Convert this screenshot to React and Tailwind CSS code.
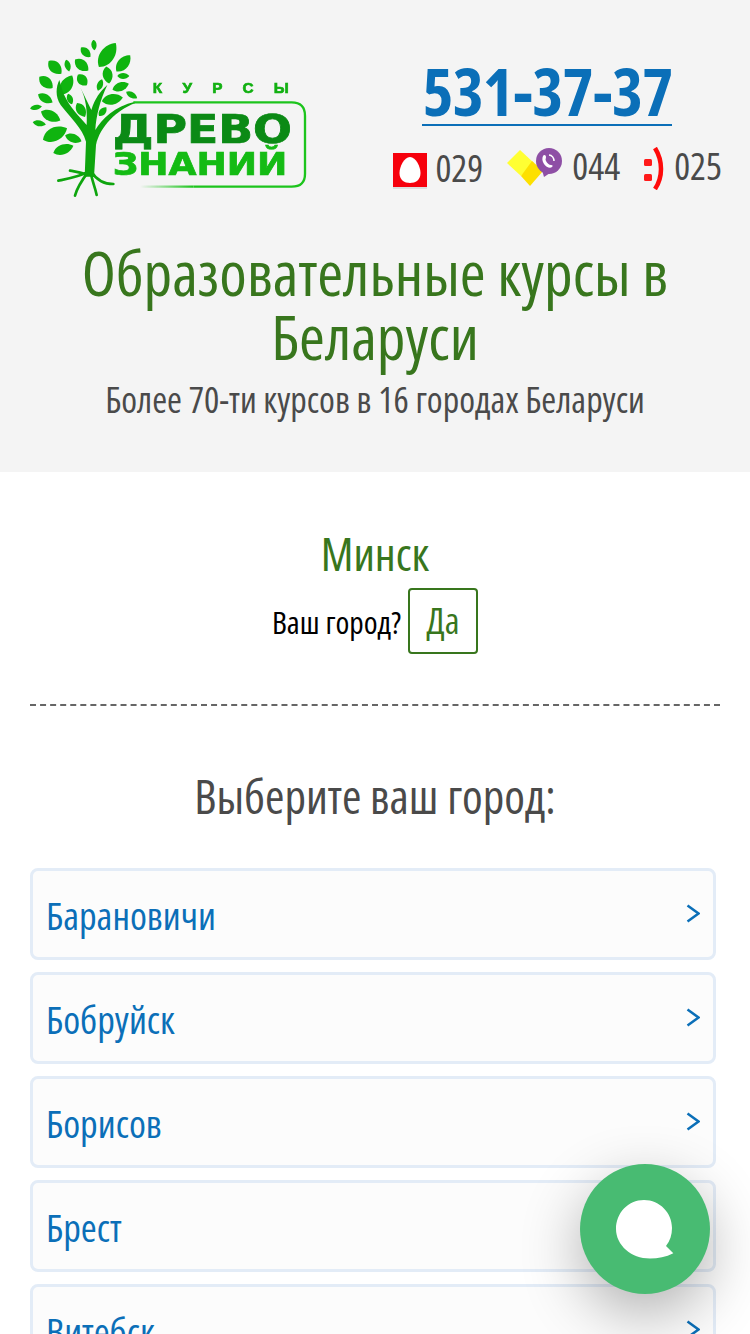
const cities = ['Барановичи', 'Бобруйск', 'Борисов', 'Брест', 'Витебск'];

// cx, cy, length, width, angle
const leaves = [
  [222, 45, 32, 16, 85], [197, 67, 40, 24, 45], [262, 75, 88, 44, -55], [185, 105, 52, 32, 40],
  [310, 100, 64, 34, -50], [105, 112, 54, 34, 45], [143, 107, 36, 18, 75], [263, 135, 52, 30, 80],
  [140, 165, 66, 36, -60], [187, 150, 42, 30, 50], [310, 138, 36, 18, 0], [240, 165, 36, 18, -70],
  [302, 170, 52, 26, -20], [78, 157, 52, 32, 40], [335, 195, 38, 18, 30], [277, 208, 64, 32, -10],
  [150, 207, 34, 18, 70], [76, 205, 50, 26, 30], [183, 240, 48, 28, 60], [248, 245, 34, 20, -50],
  [48, 232, 36, 16, -10], [92, 258, 64, 32, 25], [58, 280, 40, 18, 10], [105, 312, 80, 42, -25],
  [160, 325, 52, 26, 20], [130, 358, 64, 30, -20],
];

function Logo() {
  return (
    <svg width="280" height="160" viewBox="30 30 840 480" className="shrink-0 blur-[0.5px]">
      <defs>
        <linearGradient id="frameFade" x1="360" x2="520" y1="0" y2="0" gradientUnits="userSpaceOnUse">
          <stop offset="0" stopColor="#1cc41c" stopOpacity="0" />
          <stop offset="1" stopColor="#1cc41c" />
        </linearGradient>
      </defs>
      {leaves.map(([cx, cy, l, w, a], i) => (
        <path
          key={i}
          d={`M${-l / 2} 0C${-l / 4} ${-w * 0.7} ${l / 4} ${-w * 0.6} ${l / 2} 0C${l / 4} ${w * 0.6} ${-l / 4} ${w * 0.7} ${-l / 2} 0Z`}
          transform={`translate(${cx} ${cy}) rotate(${a})`}
          fill="#0fb40f"
        />
      ))}
      <path d="M194 440L198 335C188 295 150 262 122 225C105 200 108 170 118 150L130 190C150 235 180 262 200 285C202 240 198 205 180 170L214 240C225 205 240 185 262 165C240 210 228 260 226 300C244 268 285 228 345 215L345 220C290 240 240 290 228 345L222 440Z" fill="#0ea50e" />
      <path d="M205 425C180 440 150 445 115 452M205 425C190 445 172 470 165 497M212 425C215 450 225 470 230 495M214 425C230 450 255 462 280 462M196 432C175 425 165 425 150 422" fill="none" stroke="#0ea50e" strokeWidth="8" strokeLinecap="round" />
      <path d="M340 217H815Q855 217 855 257V432Q855 470 815 470H520" fill="none" stroke="#1cc41c" strokeWidth="7" />
      <path d="M360 470H520" fill="none" stroke="url(#frameFade)" strokeWidth="7" />
      <text x="398" y="189" textLength="408" lengthAdjust="spacing" fontFamily="'Liberation Sans', sans-serif" fontWeight="700" fontSize="46" stroke="#12b012" strokeWidth="2" fill="#12b012">КУРСЫ</text>
      <text x="278" y="338" textLength="538" lengthAdjust="spacingAndGlyphs" fontFamily="'DejaVu Sans', sans-serif" fontWeight="700" fontSize="116" stroke="#0b8a15" strokeWidth="2" fill="#0b8a15">ДРЕВО</text>
      <text x="278" y="434" textLength="524" lengthAdjust="spacingAndGlyphs" fontFamily="'DejaVu Sans', sans-serif" fontWeight="700" fontSize="96" stroke="#14bb14" strokeWidth="2" fill="#14bb14">ЗНАНИЙ</text>
    </svg>
  );
}

function MtsIcon() {
  return (
    <svg width="34" height="36" viewBox="0 0 34 36" className="shrink-0 mt-[5px]">
      <rect x="0" y="34" width="34" height="2" fill="#ddd" />
      <rect x="0" y="0" width="34" height="34" fill="#f6000c" />
      <path d="M17 4C23 4 27.500 14 27.500 20C27.500 27 22.500 30 17 30C11.500 30 6.500 27 6.500 20C6.500 14 11 4 17 4Z" fill="#fff" />
    </svg>
  );
}

function VelcomIcon() {
  return (
    <svg width="56" height="38" viewBox="0 0 56 38" className="shrink-0 ml-[24px]">
      <path d="M0 15L13 2L27 15L14 28Z" fill="#ffff33" />
      <path d="M14 28L25 13L36 23L23 38Z" fill="#fde000" />
      <circle cx="42" cy="13" r="13" fill="#8e4fa5" />
      <path d="M35 22L37 29L43 25Z" fill="#8e4fa5" />
      <path d="M36 8C37 6 39 7 39 9C39 11 38 11 39 13C40 15 42 17 44 17C46 17 46 18 45 19C43 21 39 19 37 16C35 13 35 10 36 8Z" fill="#fff" />
      <path d="M42 7C45 7 47 10 47 13" fill="none" stroke="#fff" strokeWidth="1.500" />
    </svg>
  );
}

function LifeIcon() {
  return (
    <svg width="20" height="43" viewBox="0 0 20 43" className="shrink-0 ml-[24px] -mt-[1px]">
      <rect x="0" y="12" width="8" height="7" rx="1.500" fill="#ff1a1a" />
      <rect x="0" y="27" width="8" height="7" rx="1.500" fill="#ff1a1a" />
      <path d="M11 1C19 14 19 30 11 42" fill="none" stroke="#ff0a0a" strokeWidth="4.500" />
    </svg>
  );
}

function ChevronIcon() {
  return (
    <svg width="14" height="19" viewBox="0 0 14 19" className="shrink-0 -mt-[2px]">
      <path d="M1.500 1.500L12.500 9.500L1.500 17.500" fill="none" stroke="#0b6fb8" strokeWidth="2.500" />
    </svg>
  );
}

function ChatButton() {
  return (
    <button className="fixed left-[580px] top-[1164px] w-[130px] h-[130px] rounded-full bg-[#48bb72] flex items-center justify-center shadow-[0_20px_60px_rgba(0,0,0,0.3)]">
      <svg width="58" height="59" viewBox="0 0 58 59">
        <path d="M28 0C44 0 56 13 56 28C56 35 54 41 50 46L57.300 53.300C50 57 42 58.500 34 58.500C15 58.500 0 45 0 29C0 13 12 0 28 0Z" fill="#fff" />
      </svg>
    </button>
  );
}

export default function App() {
  return (
    <div className="h-[1334px] overflow-hidden bg-white font-['Open_Sans',sans-serif] font-stretch-condensed">
      <header className="h-[472px] bg-[#f4f4f4] pt-[40px] px-[28px]">
        <div className="flex justify-between pl-[2px]">
          <Logo />
          <div className="flex flex-col items-start pt-[12px]">
            <a className="ml-[29px] w-[250px] pt-[4px] text-center text-[66px] leading-[68px] tracking-[-0.8px] font-bold text-[#0b6fb8] border-b-2 border-[#0b6fb8]">531-37-37</a>
            <div className="flex items-start text-[37.500px] leading-[40px] text-[#4a4a4a] mt-[22px]">
              <MtsIcon />
              <span className="ml-[8px]">029</span>
              <VelcomIcon />
              <span className="ml-[9px] -mt-[2px]">044</span>
              <LifeIcon />
              <span className="ml-[10px] -mt-[2px]">025</span>
            </div>
          </div>
        </div>
        <h1 className="mt-[40px] text-center text-[62.500px] leading-[64px] text-[#38761d]">Образовательные курсы в Беларуси</h1>
        <p className="mt-[12px] text-center text-[36px] leading-[40px] text-[#4a4a4a]">Более 70-ти курсов в 16 городах Беларуси</p>
      </header>
      <main className="px-[30px]">
        <div className="pt-[52px] flex flex-col items-center">
          <div className="text-[46px] leading-[58px] text-[#38761d]">Минск</div>
          <div className="mt-[6px] flex items-center text-[31.500px] text-black">
            <span className="pt-[2px]">Ваш город?</span>
            <button className="ml-[7px] w-[70px] h-[66px] border-2 border-[#38761d] rounded-[4px] text-[36px] text-[#38761d]">Да</button>
          </div>
        </div>
        <div className="mt-[50px] border-t-2 border-dashed border-[#666] w-[690px]" />
        <h2 className="mt-[60px] text-center text-[47px] leading-[60px] text-[#4a4a4a]">Выберите ваш город:</h2>
        <ul className="mt-[42px] w-[686px] flex flex-col gap-[12px]">
          {cities.map((c) => (
            <li key={c} className="h-[92px] border-[3px] border-[#e3ecf7] rounded-[8px] bg-[#fcfcfc] flex items-center justify-between pl-[13px] pr-[13px] text-[38.500px] text-[#0b6fb8]">
              <span className="pt-[4px]">{c}</span>
              <ChevronIcon />
            </li>
          ))}
        </ul>
      </main>
      <ChatButton />
    </div>
  );
}
